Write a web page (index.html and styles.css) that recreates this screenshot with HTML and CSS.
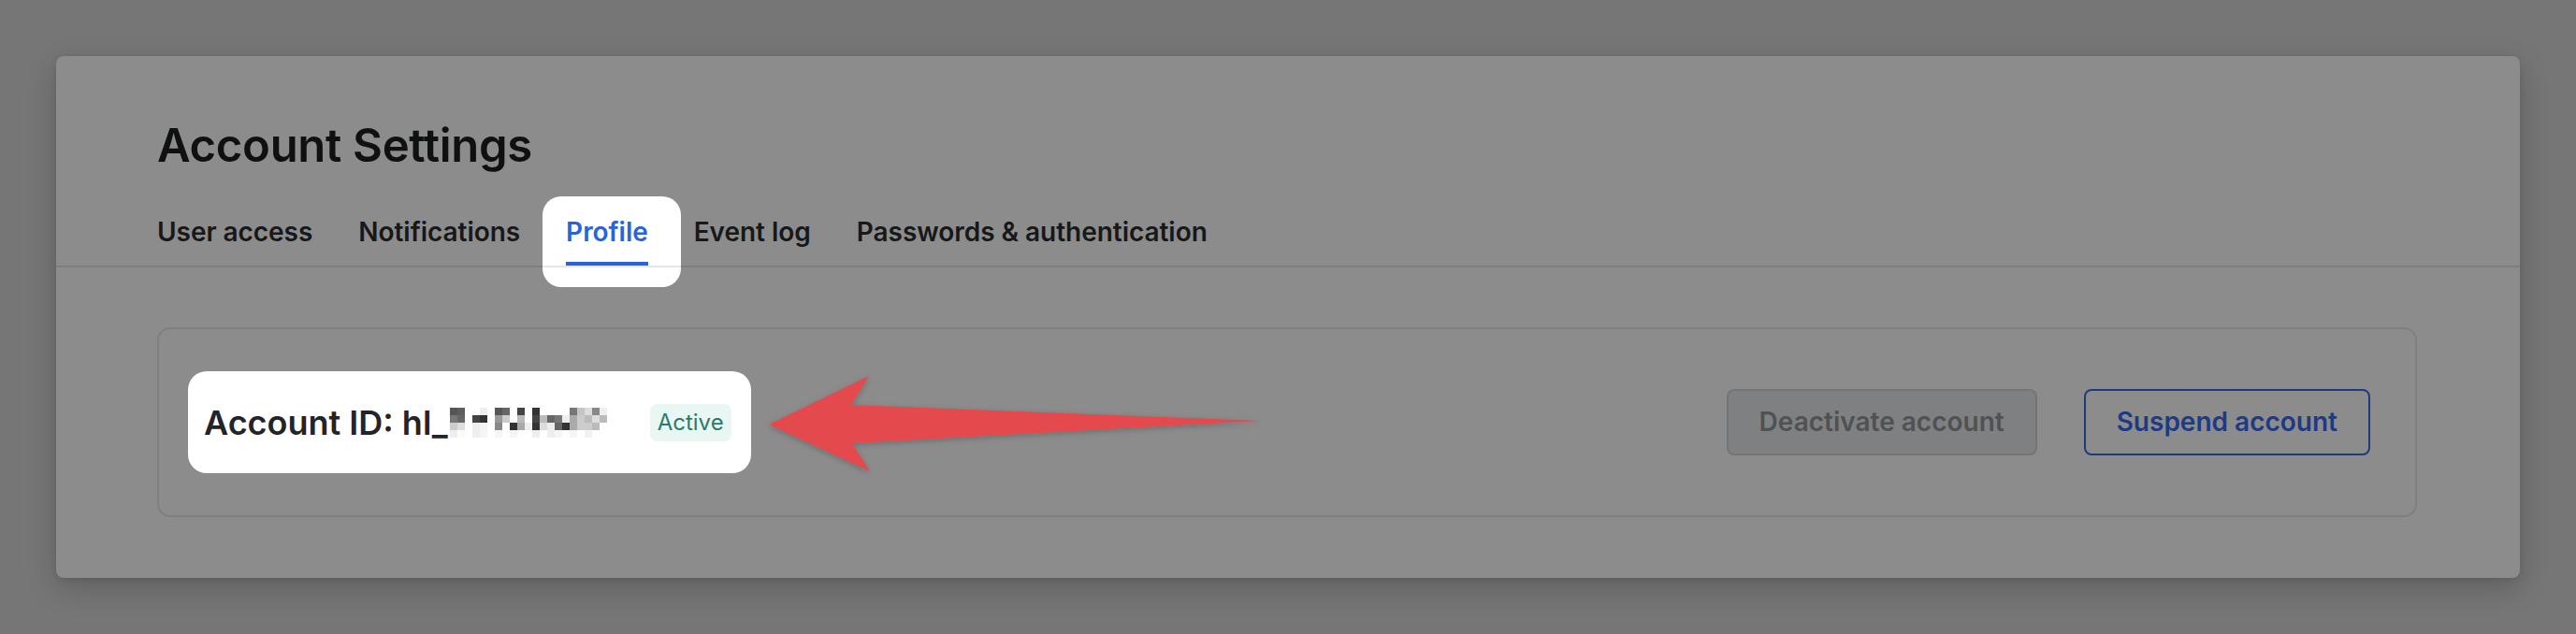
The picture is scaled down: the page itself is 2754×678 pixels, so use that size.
FILE: index.html
```html
<!DOCTYPE html>
<html lang="en">
<head>
<meta charset="utf-8">
<title>Account Settings</title>
<link rel="stylesheet" href="styles.css">
</head>
<body>
<main class="card">
  <header class="card-header">
    <h1 class="title">Account Settings</h1>
    <nav class="tabs">
      <a class="tab">User access</a>
      <a class="tab">Notifications</a>
      <a class="tab tab-active">Profile</a>
      <a class="tab">Event log</a>
      <a class="tab">Passwords &amp; authentication</a>
    </nav>
  </header>
  <section class="panel">
    <div class="id-group">
      <span class="id-label">Account ID: hl_</span>
      <svg class="mosaic" viewBox="0 0 168 32" aria-hidden="true">
        <g>
          <rect x="0" y="0" width="8" height="8" fill="#555"/><rect x="8" y="0" width="8" height="8" fill="#5e5e5e"/><rect x="16" y="0" width="8" height="8" fill="#fff"/><rect x="24" y="0" width="8" height="8" fill="#fff"/><rect x="32" y="0" width="8" height="8" fill="#eee"/><rect x="40" y="0" width="8" height="8" fill="#fff"/><rect x="48" y="0" width="8" height="8" fill="#555"/><rect x="56" y="0" width="8" height="8" fill="#666"/><rect x="64" y="0" width="8" height="8" fill="#fff"/><rect x="72" y="0" width="8" height="8" fill="#444"/><rect x="80" y="0" width="8" height="8" fill="#fff"/><rect x="88" y="0" width="8" height="8" fill="#333"/><rect x="96" y="0" width="8" height="8" fill="#fff"/><rect x="104" y="0" width="8" height="8" fill="#fff"/><rect x="112" y="0" width="8" height="8" fill="#fff"/><rect x="120" y="0" width="8" height="8" fill="#fff"/><rect x="128" y="0" width="8" height="8" fill="#777"/><rect x="136" y="0" width="8" height="8" fill="#c4c4c4"/><rect x="144" y="0" width="8" height="8" fill="#ddd"/><rect x="152" y="0" width="8" height="8" fill="#888"/><rect x="160" y="0" width="8" height="8" fill="#eee"/>
          <rect x="0" y="8" width="8" height="8" fill="#777"/><rect x="8" y="8" width="8" height="8" fill="#666"/><rect x="16" y="8" width="8" height="8" fill="#fff"/><rect x="24" y="8" width="8" height="8" fill="#444"/><rect x="32" y="8" width="8" height="8" fill="#333"/><rect x="40" y="8" width="8" height="8" fill="#fff"/><rect x="48" y="8" width="8" height="8" fill="#999"/><rect x="56" y="8" width="8" height="8" fill="#ccc"/><rect x="64" y="8" width="8" height="8" fill="#fff"/><rect x="72" y="8" width="8" height="8" fill="#bbb"/><rect x="80" y="8" width="8" height="8" fill="#fff"/><rect x="88" y="8" width="8" height="8" fill="#444"/><rect x="96" y="8" width="8" height="8" fill="#bbb"/><rect x="104" y="8" width="8" height="8" fill="#666"/><rect x="112" y="8" width="8" height="8" fill="#777"/><rect x="120" y="8" width="8" height="8" fill="#eee"/><rect x="128" y="8" width="8" height="8" fill="#aaa"/><rect x="136" y="8" width="8" height="8" fill="#ccc"/><rect x="144" y="8" width="8" height="8" fill="#bbb"/><rect x="152" y="8" width="8" height="8" fill="#ddd"/><rect x="160" y="8" width="8" height="8" fill="#bbb"/>
          <rect x="0" y="16" width="8" height="8" fill="#ccc"/><rect x="8" y="16" width="8" height="8" fill="#ddd"/><rect x="16" y="16" width="8" height="8" fill="#fff"/><rect x="24" y="16" width="8" height="8" fill="#eee"/><rect x="32" y="16" width="8" height="8" fill="#f5f5f5"/><rect x="40" y="16" width="8" height="8" fill="#fff"/><rect x="48" y="16" width="8" height="8" fill="#888"/><rect x="56" y="16" width="8" height="8" fill="#fff"/><rect x="64" y="16" width="8" height="8" fill="#333"/><rect x="72" y="16" width="8" height="8" fill="#aaa"/><rect x="80" y="16" width="8" height="8" fill="#eee"/><rect x="88" y="16" width="8" height="8" fill="#333"/><rect x="96" y="16" width="8" height="8" fill="#ddd"/><rect x="104" y="16" width="8" height="8" fill="#eee"/><rect x="112" y="16" width="8" height="8" fill="#666"/><rect x="120" y="16" width="8" height="8" fill="#333"/><rect x="128" y="16" width="8" height="8" fill="#aaa"/><rect x="136" y="16" width="8" height="8" fill="#ccc"/><rect x="144" y="16" width="8" height="8" fill="#ccc"/><rect x="152" y="16" width="8" height="8" fill="#bbb"/><rect x="160" y="16" width="8" height="8" fill="#fff"/>
          <rect x="0" y="24" width="8" height="8" fill="#eee"/><rect x="8" y="24" width="8" height="8" fill="#fafafa"/><rect x="16" y="24" width="8" height="8" fill="#fff"/><rect x="24" y="24" width="8" height="8" fill="#eee"/><rect x="32" y="24" width="8" height="8" fill="#f5f5f5"/><rect x="40" y="24" width="8" height="8" fill="#fff"/><rect x="48" y="24" width="8" height="8" fill="#f5f5f5"/><rect x="56" y="24" width="8" height="8" fill="#fff"/><rect x="64" y="24" width="8" height="8" fill="#f5f5f5"/><rect x="72" y="24" width="8" height="8" fill="#fff"/><rect x="80" y="24" width="8" height="8" fill="#fff"/><rect x="88" y="24" width="8" height="8" fill="#eee"/><rect x="96" y="24" width="8" height="8" fill="#fff"/><rect x="104" y="24" width="8" height="8" fill="#eee"/><rect x="112" y="24" width="8" height="8" fill="#f5f5f5"/><rect x="120" y="24" width="8" height="8" fill="#fff"/><rect x="128" y="24" width="8" height="8" fill="#f5f5f5"/><rect x="136" y="24" width="8" height="8" fill="#fff"/><rect x="144" y="24" width="8" height="8" fill="#f2f2f2"/><rect x="152" y="24" width="8" height="8" fill="#fff"/><rect x="160" y="24" width="8" height="8" fill="#fff"/>
        </g>
      </svg>
      <span class="badge">Active</span>
    </div>
    <div class="actions">
      <button class="btn btn-muted" type="button">Deactivate account</button>
      <button class="btn btn-outline" type="button">Suspend account</button>
    </div>
  </section>
  <svg class="arrow" viewBox="0 0 545 120" aria-hidden="true">
    <defs>
      <filter id="arrowShadow" x="-10%" y="-30%" width="120%" height="160%">
        <feDropShadow dx="0" dy="2" stdDeviation="3" flood-color="#000" flood-opacity="0.22"/>
      </filter>
    </defs>
    <path d="M7 59 L114 7 L95 38 L533 55 L96 79 L115 109 Z" fill="#e4494d" filter="url(#arrowShadow)"/>
  </svg>
</main>
</body>
</html>
```

FILE: styles.css
```css
html, body {
  margin: 0;
  background: #767676;
}

body {
  padding: 60px;
  font-family: Inter, "Noto Sans", "Liberation Sans", sans-serif;
}

.card {
  display: flow-root;
  position: relative;
  background: #8c8c8c;
  border-radius: 8px;
  box-shadow: 0 10px 32px rgba(0, 0, 0, 0.2), 0 2px 6px rgba(0, 0, 0, 0.08);
}

.card-header {
  padding: 67px 108px 0;
  border-bottom: 2px solid #7e7e7e;
}

.title {
  margin: 0;
  font-size: 49px;
  line-height: 58px;
  font-weight: 600;
  letter-spacing: -0.3px;
  color: #0f1010;
}

.tabs {
  display: flex;
  gap: 49px;
  margin-top: 46px;
}

.tab {
  position: relative;
  font-size: 28px;
  line-height: 34px;
  font-weight: 600;
  letter-spacing: -0.04px;
  color: #17181a;
  padding-bottom: 19px;
  white-space: nowrap;
}

.tab-active {
  color: #2b63d9;
  z-index: 0;
}

.tab-active::before {
  content: "";
  position: absolute;
  left: -25px;
  right: -35px;
  top: -21px;
  bottom: -23px;
  border-radius: 20px;
  background: linear-gradient(#fff 0 74px, #e4e6ea 74px 76px, #fff 76px);
  z-index: -1;
}

.tab-active::after {
  content: "";
  position: absolute;
  left: 0;
  right: 0;
  bottom: 0;
  height: 4px;
  background: #2b63d9;
}

.panel {
  margin: 64px 110px 65px 108px;
  border: 2px solid #7f7f7f;
  border-radius: 14px;
  padding: 64px 48px;
  display: flex;
  align-items: center;
  justify-content: space-between;
}

.id-group {
  position: relative;
  z-index: 0;
  display: flex;
  align-items: center;
}

.id-group::before {
  content: "";
  position: absolute;
  left: -17px;
  right: -21px;
  top: -33px;
  bottom: -32px;
  border-radius: 20px;
  background: #fff;
  z-index: -1;
}

.id-label {
  font-size: 36px;
  line-height: 44px;
  font-weight: 600;
  color: #222427;
  white-space: nowrap;
}

.mosaic {
  display: block;
  width: 168px;
  height: 32px;
  margin-left: 2px;
}

.badge {
  margin-left: 46px;
  padding: 0 8px;
  border-radius: 8px;
  background: #e8f7f3;
  color: #2e7a66;
  font-size: 24px;
  line-height: 40px;
}

.actions {
  display: flex;
  gap: 50px;
}

.btn {
  font-family: inherit;
  font-size: 28px;
  font-weight: 600;
  line-height: 35px;
  padding: 16px 33px;
  border-radius: 8px;
  border: 2px solid;
  white-space: nowrap;
}

.btn-muted {
  background: #7f8082;
  border-color: #747576;
  color: #505152;
}

.btn-outline {
  background: transparent;
  border-color: #1e3b80;
  color: #1c3a85;
}

.arrow {
  position: absolute;
  left: 755px;
  top: 335px;
  width: 545px;
  height: 120px;
  overflow: visible;
}
```
